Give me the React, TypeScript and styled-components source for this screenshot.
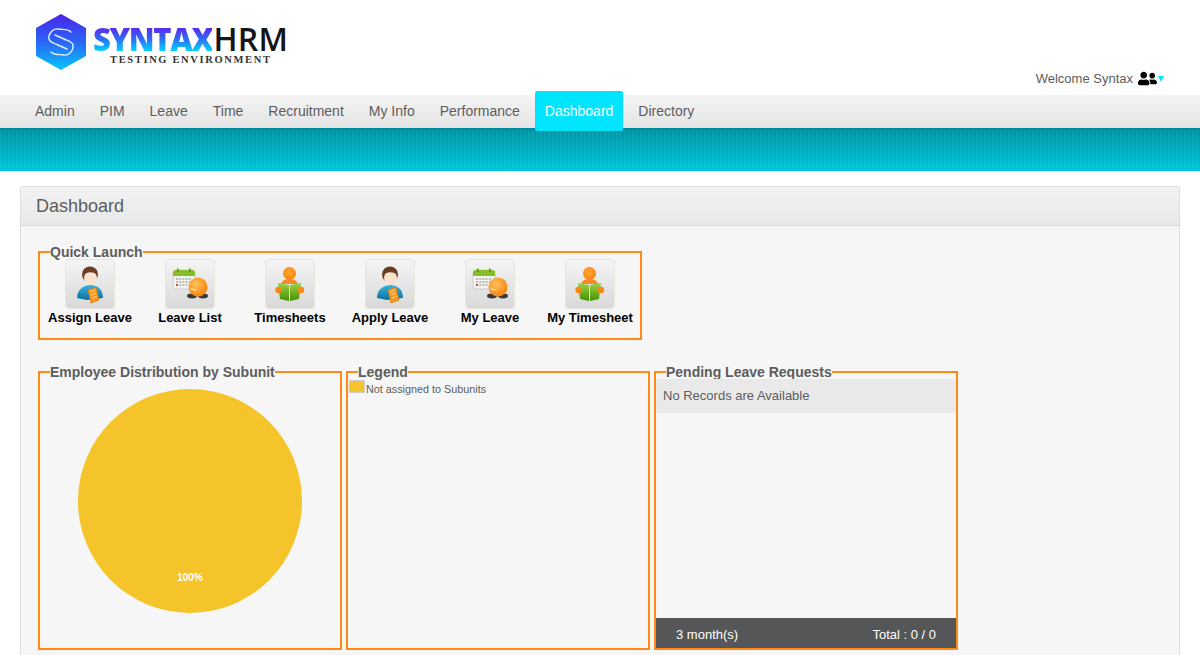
import React from 'react';
import styled, { createGlobalStyle } from 'styled-components';
import { FaUserFriends } from 'react-icons/fa';

const GlobalStyle = createGlobalStyle`
  html, body {
    margin: 0;
    padding: 0;
    height: 655px;
    overflow: hidden;
    background: #ffffff;
    font-family: "Liberation Sans", Arial, sans-serif;
    color: #5d5d5d;
  }
`;

const Header = styled.header`
  height: 95px;
  display: flex;
  justify-content: space-between;
  padding: 13px 36px 0 36px;
  box-sizing: border-box;
`;

const Logo = styled.div`
  display: flex;
  align-items: flex-start;
  height: 58px;
`;

const LogoText = styled.div`
  display: flex;
  flex-direction: column;
  align-items: flex-start;
  margin-left: 7px;
  padding-top: 11px;
`;

const Brand = styled.div`
  display: flex;
  font-family: "Open Sans", sans-serif;
  font-size: 31px;
  line-height: 30px;
  height: 30px;
`;

const BrandBlue = styled.span`
  display: block;
  height: 30px;
  font-weight: 800;
  letter-spacing: -1.35px;
  background: linear-gradient(180deg, #5a2bf0 15%, #2d6cf5 50%, #07c8fb 85%);
  -webkit-background-clip: text;
  background-clip: text;
  color: transparent;
`;

const BrandDark = styled.span`
  display: block;
  height: 30px;
  font-size: 32px;
  font-weight: 600;
  letter-spacing: 0.3px;
  color: #151515;
  margin-left: 1px;
`;

const Tagline = styled.div`
  font-family: "Liberation Serif", serif;
  font-weight: 700;
  font-size: 10.5px;
  line-height: 11px;
  letter-spacing: 1.64px;
  color: #333333;
  margin-left: 17px;
  white-space: nowrap;
`;

const UserBox = styled.div`
  display: flex;
  align-items: center;
  align-self: flex-end;
  height: 18px;
  margin-bottom: 8px;
  font-size: 13px;
`;

const UserIcon = styled(FaUserFriends)`
  color: #000000;
  font-size: 19px;
  margin-left: 5px;
`;

const Caret = styled.span`
  width: 0;
  height: 0;
  margin: 2px 0 0 1px;
  border-left: 3px solid transparent;
  border-right: 3px solid transparent;
  border-top: 6px solid #00e5ff;
`;

const NavBar = styled.nav`
  height: 33px;
  display: flex;
  gap: 5px;
  padding-left: 25px;
  background: linear-gradient(180deg, #f4f4f4 0%, #e4e4e4 100%);
`;

const NavItem = styled.a<{ $active?: boolean }>`
  display: flex;
  align-items: center;
  box-sizing: border-box;
  padding: 0 10px ${(p) => (p.$active ? '0' : '2px')};
  font-size: 14px;
  height: ${(p) => (p.$active ? '40px' : '33px')};
  margin-top: ${(p) => (p.$active ? '-4px' : '0')};
  background: ${(p) => (p.$active ? '#00e5ff' : 'transparent')};
  color: ${(p) => (p.$active ? '#ffffff' : '#5d5d5d')};
  border-radius: ${(p) => (p.$active ? '2px' : '0')};
  position: relative;
  z-index: 1;
`;

const Strip = styled.div`
  height: 43px;
  box-sizing: border-box;
  border-top: 2px solid #008c9a;
  background:
    repeating-linear-gradient(90deg, rgba(255, 255, 255, 0.03) 0 2px, rgba(0, 0, 0, 0.03) 2px 4px),
    linear-gradient(180deg, #0099a9 0%, #00c9df 100%);
`;

const Panel = styled.main`
  margin: 15px 20px 0;
  border: 1px solid #dedede;
  border-bottom: none;
  border-radius: 3px 3px 0 0;
  background: #f6f6f6;
  height: 468px;
`;

const PanelHead = styled.h1`
  margin: 0;
  height: 39px;
  box-sizing: border-box;
  padding-left: 15px;
  font-size: 18px;
  font-weight: 400;
  line-height: 38px;
  color: #5d5d5d;
  background: linear-gradient(180deg, #f2f2f2 0%, #e8e8e8 100%);
  border-bottom: 1px solid #dcdcdc;
`;

const PanelBody = styled.div`
  padding: 19px 17px 0;
`;

const Box = styled.fieldset`
  margin: 0;
  padding: 0;
  min-width: 0;
  border: 2px solid #ff8a14;
  box-sizing: border-box;
`;

const BoxLegend = styled.legend`
  margin-left: 10px;
  padding: 0;
  font-size: 14px;
  font-weight: 700;
  line-height: 14px;
  color: #5d5d5d;
`;

const QuickBox = styled(Box)`
  width: 604px;
  height: 95px;
  margin-bottom: 25px;
`;

const QuickRow = styled.div`
  display: grid;
  grid-template-columns: repeat(6, 100px);
`;

const QuickItem = styled.a`
  display: flex;
  flex-direction: column;
  align-items: center;
`;

const QuickIcon = styled.div`
  width: 50px;
  height: 50px;
  box-sizing: border-box;
  border: 1px solid #e6e6df;
  border-radius: 4px;
  background: linear-gradient(180deg, #f4f4f4 0%, #d9d9d9 100%);
`;

const QuickLabel = styled.span`
  margin-top: 1px;
  font-size: 13px;
  font-weight: 700;
  line-height: 15px;
  color: #000000;
  white-space: nowrap;
`;

const WidgetRow = styled.div`
  display: grid;
  grid-template-columns: repeat(3, 304px);
  gap: 4px;
`;

const Widget = styled(Box)`
  height: 285px;
`;

const PieWrap = styled.div`
  display: flex;
  justify-content: center;
  padding-top: 10px;
`;

const LegendRow = styled.div`
  display: flex;
  align-items: flex-start;
  padding: 1px 0 0 1px;
  font-size: 10.8px;
  line-height: 19px;
  color: #5d5d5d;
`;

const Swatch = styled.span`
  width: 16px;
  height: 13px;
  margin-right: 1px;
  box-sizing: border-box;
  border: 1px solid #cfcfcf;
  background: #f4c42a;
`;

const Pending = styled.div`
  height: 269px;
  display: flex;
  flex-direction: column;
  justify-content: space-between;
`;

const PendingRow = styled.div`
  height: 34px;
  padding-left: 7px;
  font-size: 13px;
  line-height: 34px;
  color: #5d5d5d;
  background: #e9e9e9;
`;

const PendingFoot = styled.div`
  height: 30px;
  display: flex;
  justify-content: space-between;
  padding: 0 20px;
  font-size: 13px;
  line-height: 34px;
  color: #ffffff;
  background: #555657;
`;

const HexLogo = () => (
  <svg width="50" height="58" viewBox="0 0 50 58">
    <defs>
      <linearGradient id="hex" x1="0" y1="0" x2="0" y2="1">
        <stop offset="0" stopColor="#4a22e8" />
        <stop offset="0.5" stopColor="#2a66f6" />
        <stop offset="1" stopColor="#06c6fb" />
      </linearGradient>
    </defs>
    <path d="M25 1 L50 15 L50 43 L25 57 L0 43 L0 15 Z" fill="url(#hex)" />
    <path
      d="M35 19 C31 15 26 17 22 16 C17 15 12 21 13 26 C14 30 18 30 22 32 L31 36 M15 39 C19 43 24 41 28 42 C33 43 38 37 37 32 C36 28 32 28 28 26 L19 22"
      fill="none"
      stroke="#e4ecff"
      strokeWidth="1.4"
      strokeLinecap="round"
    />
  </svg>
);

const PersonIcon = () => (
  <svg width="48" height="48" viewBox="1 1 48 48">
    <defs>
      <linearGradient id="shirt" x1="0" y1="0" x2="0" y2="1">
        <stop offset="0" stopColor="#35b4e6" />
        <stop offset="1" stopColor="#0f6f9e" />
      </linearGradient>
    </defs>
    <path d="M12 39 C12 31 17 27 25 26 C33 26 38 31 38 39 L22 41 Z" fill="url(#shirt)" />
    <ellipse cx="25" cy="15.5" rx="8" ry="8" fill="#6b3d22" />
    <ellipse cx="25.5" cy="19" rx="6.5" ry="7" fill="#fbe2cf" />
    <path d="M19 16 C21 13 28 12 32 16 L32 11 L20 10 Z" fill="#6b3d22" />
    <path d="M23 31 L31 28 L34 41 L26 44 Z" fill="#f59a1e" stroke="#d97a0c" strokeWidth="0.7" />
    <path d="M25 33 L30 31 M26 36 L31 34 M27 39 L32 37" stroke="#ffd28a" strokeWidth="1" />
  </svg>
);

const CalendarIcon = () => (
  <svg width="48" height="48" viewBox="1 1 48 48">
    <defs>
      <radialGradient id="ball" cx="0.4" cy="0.35" r="0.7">
        <stop offset="0" stopColor="#ffc35c" />
        <stop offset="1" stopColor="#f57f0a" />
      </radialGradient>
    </defs>
    <rect x="8" y="11" width="22" height="19" rx="3" fill="#f2f2ee" stroke="#bdbdb5" strokeWidth="0.6" />
    <path d="M8 17 L8 14 C8 12 9 11 11 11 L27 11 C29 11 30 12 30 14 L30 17 Z" fill="#86bd2a" />
    <rect x="12" y="9.5" width="1.6" height="3.5" fill="#5f8d1a" />
    <rect x="24" y="9.5" width="1.6" height="3.5" fill="#5f8d1a" />
    <path d="M11 20 H27 M11 23 H27 M11 26 H23" stroke="#a9a9a9" strokeWidth="1.4" strokeDasharray="2 1.2" />
    <rect x="11" y="25" width="2" height="2" fill="#d9483a" />
    <ellipse cx="27" cy="37" rx="5" ry="2.4" fill="#3a3a3a" />
    <ellipse cx="38" cy="37" rx="5" ry="2.4" fill="#3a3a3a" />
    <circle cx="33" cy="28" r="9.5" fill="url(#ball)" />
    <path d="M26 30 L31 31" stroke="#fff3d8" strokeWidth="1.2" strokeLinecap="round" />
  </svg>
);

const ReaderIcon = () => (
  <svg width="48" height="48" viewBox="1 1 48 48">
    <defs>
      <linearGradient id="book" x1="0" y1="0" x2="0" y2="1">
        <stop offset="0" stopColor="#9ed04a" />
        <stop offset="1" stopColor="#459200" />
      </linearGradient>
      <radialGradient id="head" cx="0.45" cy="0.4" r="0.7">
        <stop offset="0" stopColor="#ffa830" />
        <stop offset="1" stopColor="#f57f0a" />
      </radialGradient>
    </defs>
    <circle cx="24.5" cy="14.5" r="6.5" fill="url(#head)" />
    <path d="M16 25 C17 21 21 20 24.5 20 C28 20 32 21 33 25 Z" fill="#f58a2a" />
    <path d="M13 24 L24 26 L24 42 L15 40 Z" fill="url(#book)" />
    <path d="M36 24 L25 26 L25 42 L34 40 Z" fill="url(#book)" />
    <circle cx="13.5" cy="31" r="3.2" fill="#f58a12" />
    <circle cx="36" cy="31" r="3.2" fill="#f58a12" />
  </svg>
);

const quickLinks = [
  { label: 'Assign Leave', icon: <PersonIcon /> },
  { label: 'Leave List', icon: <CalendarIcon /> },
  { label: 'Timesheets', icon: <ReaderIcon /> },
  { label: 'Apply Leave', icon: <PersonIcon /> },
  { label: 'My Leave', icon: <CalendarIcon /> },
  { label: 'My Timesheet', icon: <ReaderIcon /> },
];

const menu = ['Admin', 'PIM', 'Leave', 'Time', 'Recruitment', 'My Info', 'Performance', 'Dashboard', 'Directory'];

const App: React.FC = () => {
  return (
    <>
      <GlobalStyle />
      <Header>
        <Logo>
          <HexLogo />
          <LogoText>
            <Brand>
              <BrandBlue>SYNTAX</BrandBlue>
              <BrandDark>HRM</BrandDark>
            </Brand>
            <Tagline>TESTING ENVIRONMENT</Tagline>
          </LogoText>
        </Logo>
        <UserBox>
          Welcome Syntax
          <UserIcon />
          <Caret />
        </UserBox>
      </Header>

      <NavBar>
        {menu.map((item) => (
          <NavItem key={item} $active={item === 'Dashboard'}>
            {item}
          </NavItem>
        ))}
      </NavBar>
      <Strip />

      <Panel>
        <PanelHead>Dashboard</PanelHead>
        <PanelBody>
          <QuickBox>
            <BoxLegend>Quick Launch</BoxLegend>
            <QuickRow>
              {quickLinks.map((link) => (
                <QuickItem key={link.label}>
                  <QuickIcon>{link.icon}</QuickIcon>
                  <QuickLabel>{link.label}</QuickLabel>
                </QuickItem>
              ))}
            </QuickRow>
          </QuickBox>

          <WidgetRow>
            <Widget>
              <BoxLegend>Employee Distribution by Subunit</BoxLegend>
              <PieWrap>
                <svg width="224" height="224" viewBox="0 0 224 224">
                  <circle cx="112" cy="112" r="112" fill="#f4c42a" />
                  <text
                    x="112"
                    y="192"
                    fill="#ffffff"
                    fontSize="10"
                    fontWeight="700"
                    textAnchor="middle"
                    fontFamily="Liberation Sans, sans-serif"
                  >
                    100%
                  </text>
                </svg>
              </PieWrap>
            </Widget>
            <Widget>
              <BoxLegend>Legend</BoxLegend>
              <LegendRow>
                <Swatch />
                Not assigned to Subunits
              </LegendRow>
            </Widget>
            <Widget>
              <BoxLegend>Pending Leave Requests</BoxLegend>
              <Pending>
                <PendingRow>No Records are Available</PendingRow>
                <PendingFoot>
                  <span>3 month(s)</span>
                  <span>Total : 0 / 0</span>
                </PendingFoot>
              </Pending>
            </Widget>
          </WidgetRow>
        </PanelBody>
      </Panel>
    </>
  );
};

export default App;
